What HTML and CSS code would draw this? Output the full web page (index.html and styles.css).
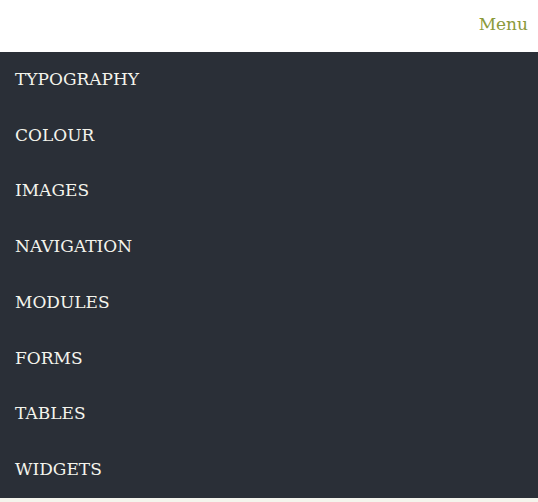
FILE: index.html
```html
<!DOCTYPE html>
<html lang="en">
<head>
<meta charset="utf-8">
<title>Menu</title>
<link rel="stylesheet" href="styles.css">
</head>
<body>
<header class="site-header">
  <a class="menu-toggle" href="#">Menu</a>
</header>
<nav class="main-nav">
  <ul class="nav-list">
    <li><a href="#">TYPOGRAPHY</a></li>
    <li><a href="#">COLOUR</a></li>
    <li><a href="#">IMAGES</a></li>
    <li><a href="#">NAVIGATION</a></li>
    <li><a href="#">MODULES</a></li>
    <li><a href="#">FORMS</a></li>
    <li><a href="#">TABLES</a></li>
    <li><a href="#">WIDGETS</a></li>
  </ul>
</nav>
</body>
</html>
```
FILE: styles.css
```css
html, body {
  margin: 0;
  padding: 0;
}
body {
  background: #f4f4ec;
  font-family: "DejaVu Serif", "Liberation Serif", serif;
}
.site-header {
  height: 52px;
  background: #ffffff;
  display: flex;
  justify-content: flex-end;
  align-items: flex-start;
  padding: 0 10px;
}
.menu-toggle {
  color: #8b9a3b;
  text-decoration: none;
  font-size: 17px;
  line-height: 48px;
}
.main-nav {
  background: #2a2f37;
}
.nav-list {
  list-style: none;
  margin: 0;
  padding: 0;
}
.nav-list li a {
  display: block;
  padding: 0 15px;
  line-height: 55.7px;
  font-size: 17px;
  color: #f4f4ec;
  text-decoration: none;
}
```
